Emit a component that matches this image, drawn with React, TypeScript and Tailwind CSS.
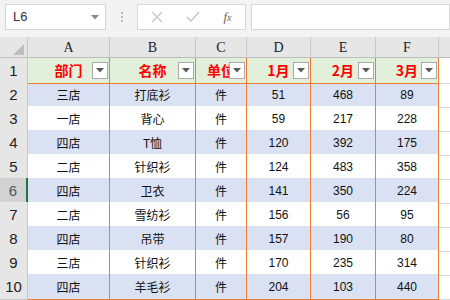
import React from "react";

const cols = ["A", "B", "C", "D", "E", "F"];
const headers = ["部门", "名称", "单位", "1月", "2月", "3月"];
const rows: (string | number)[][] = [
  ["三店", "打底衫", "件", 51, 468, 89],
  ["一店", "背心", "件", 59, 217, 228],
  ["四店", "T恤", "件", 120, 392, 175],
  ["二店", "针织衫", "件", 124, 483, 358],
  ["四店", "卫衣", "件", 141, 350, 224],
  ["二店", "雪纺衫", "件", 156, 56, 95],
  ["四店", "吊带", "件", 157, 190, 80],
  ["三店", "针织衫", "件", 170, 235, 314],
  ["四店", "羊毛衫", "件", 204, 103, 440],
];

const gridCols = "grid grid-cols-[28px_82px_86px_51px_64px_65px_63px_1fr]";
const cjk = "font-['Noto_Sans_CJK_SC',sans-serif]";

function FilterBtn() {
  return (
    <div className="absolute right-[1px] top-[4px] w-[16px] h-[17px] bg-white border border-[#a9a9a9] flex items-center justify-center">
      <svg width="8" height="5" viewBox="0 0 8 5">
        <path d="M0 0 L8 0 L4 4.5 Z" fill="#5a5a5a" />
      </svg>
    </div>
  );
}

export default function App() {
  return (
    <div className="w-[450px] h-[300px] overflow-hidden bg-white font-['Liberation_Sans',sans-serif]">
      {/* formula bar */}
      <div className="h-[37px] bg-[#f3f3f3] flex items-start pt-[4px] pl-[5px]">
        <div className="w-[101px] h-[26px] bg-white border border-[#d6d6d6] flex items-center justify-between pl-[7px] pr-[6px]">
          <span className="text-[13px] text-[#333]">L6</span>
          <svg width="8" height="5" viewBox="0 0 8 5">
            <path d="M0 0 L8 0 L4 4.5 Z" fill="#8a8a8a" />
          </svg>
        </div>
        <div className="w-[31px] h-[26px] flex flex-col items-center justify-center gap-[2px]">
          <div className="w-[2px] h-[2px] bg-[#b8b8b8]" />
          <div className="w-[2px] h-[2px] bg-[#b8b8b8]" />
          <div className="w-[2px] h-[2px] bg-[#b8b8b8]" />
        </div>
        <div className="w-[109px] h-[26px] bg-white border border-[#d6d6d6] flex items-center">
          <div className="w-[38px] flex justify-center">
            <svg width="12" height="12" viewBox="0 0 12 12">
              <path d="M1 1 L11 11 M11 1 L1 11" stroke="#c4c4c4" strokeWidth="1.3" />
            </svg>
          </div>
          <div className="w-[34px] flex justify-center">
            <svg width="14" height="12" viewBox="0 0 14 12">
              <path d="M1 6 L5 10 L13 1" stroke="#c4c4c4" strokeWidth="1.3" fill="none" />
            </svg>
          </div>
          <div className="flex-1 flex justify-center">
            <span className="font-['Liberation_Serif',serif] italic text-[13px] text-[#666]">
              f<span className="text-[10px]">x</span>
            </span>
          </div>
        </div>
        <div className="ml-[5px] flex-1 h-[26px] bg-white border border-[#d6d6d6]" />
      </div>

      {/* column headers */}
      <div className={`${gridCols} h-[21px] bg-[#e6e6e6] border-b border-[#bdbdbd]`}>
        <div className="relative border-r border-[#c8c8c8]">
          <svg className="absolute right-[3px] bottom-[3px]" width="11" height="11" viewBox="0 0 11 11">
            <path d="M11 0 L11 11 L0 11 Z" fill="#bdbdbd" />
          </svg>
        </div>
        {cols.map((c) => (
          <div
            key={c}
            className="border-r border-[#c8c8c8] flex items-center justify-center font-['Liberation_Serif',serif] text-[14px] text-[#222]"
          >
            {c}
          </div>
        ))}
        <div />
      </div>

      {/* row 1 */}
      <div className={`${gridCols} h-[24px]`}>
        <div className="bg-[#e6e6e6] border-r border-b border-[#c8c8c8] flex items-center justify-center pt-[2px] text-[15px] text-[#222]">
          1
        </div>
        {headers.map((h) => (
          <div
            key={h}
            className={`relative bg-[#e2efda] border-r border-b border-[#ed7d31] flex items-center justify-center ${cjk} font-bold text-[14px] text-[#ff0000]`}
          >
            {h}
            <FilterBtn />
          </div>
        ))}
        <div className="border-b border-[#d9d9d9]" />
      </div>

      {rows.map((r, i) => {
        const n = i + 2;
        const blue = i % 2 === 0;
        const sel = n === 6;
        return (
          <div key={n} className={`${gridCols} h-[24px]`}>
            <div
              className={`border-b border-[#c8c8c8] flex items-center justify-center pt-[2px] text-[15px] ${
                sel
                  ? "bg-[#d2d2d2] text-[#555] border-r-2 border-r-[#217346]"
                  : "bg-[#e6e6e6] text-[#222] border-r border-r-[#c8c8c8]"
              }`}
            >
              {n}
            </div>
            {r.map((v, j) => (
              <div
                key={j}
                className={`${blue ? "bg-[#d9e1f2]" : "bg-white"} border-r border-b border-[#ed7d31] flex items-center justify-center pt-[1px] text-[#111] ${
                  typeof v === "number" ? "text-[12px] font-['Liberation_Sans',sans-serif]" : `text-[12px] ${cjk}`
                }`}
              >
                {v}
              </div>
            ))}
            <div className="border-b border-[#d9d9d9]" />
          </div>
        );
      })}
    </div>
  );
}
